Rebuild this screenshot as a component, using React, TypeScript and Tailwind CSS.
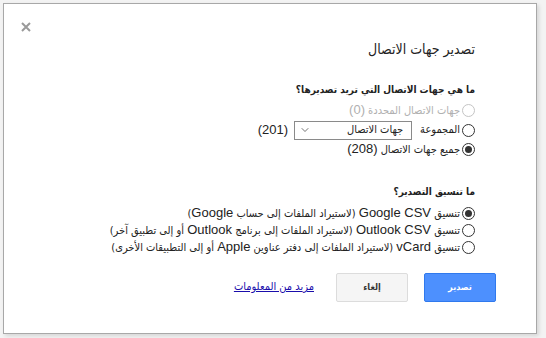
import { ChevronDown } from "lucide-react";

const Radio = ({ checked, disabled }: { checked?: boolean; disabled?: boolean }) => (
  <span
    className={`inline-flex h-[13px] w-[13px] shrink-0 items-center justify-center rounded-full border bg-white ${
      disabled ? "border-[#c4c4c4]" : "border-[#333]"
    }`}
  >
    {checked && <span className="h-[7px] w-[7px] rounded-full bg-[#333]" />}
  </span>
);

// latin words and digits keep Arial metrics
const L = ({ children }: { children: React.ReactNode }) => (
  <span className="text-[13px]" style={{ fontFamily: '"Liberation Sans", Arial, sans-serif' }}>
    {children}
  </span>
);

export default function App() {
  return (
    <div
      className="h-[338px] w-[546px] bg-[#f3f3f3] p-[3px]"
      style={{ fontFamily: '"DejaVu Sans Condensed", "DejaVu Sans", sans-serif' }}
    >
      <div
        dir="rtl"
        className="relative flex h-[331px] w-[534px] flex-col border border-[#a8a8a8] bg-white pr-[61px] text-[11px] text-[#222] shadow-[2px_2px_4px_rgba(0,0,0,0.12)]"
      >
        <svg className="absolute left-[17px] top-[18px]" width="10" height="10" viewBox="0 0 10 10">
          <path d="M1 1L9 9M9 1L1 9" stroke="#9a9a9a" strokeWidth="2" />
        </svg>

        <h1 className="mt-[34px] text-[14px] leading-[22px]">تصدير جهات الاتصال</h1>

        <h2 className="mt-[21px] text-[10px] font-bold leading-[18px]">ما هي جهات الاتصال التي تريد تصديرها؟</h2>
        <div className="mt-[2px] flex flex-col leading-[16px]">
          <label className="flex h-[19px] items-center gap-[2px] text-[#b0b0b0]">
            <Radio disabled />
            <span>
              جهات الاتصال المحددة <L>(0)</L>
            </span>
          </label>
          <label className="flex h-[20px] items-center gap-[2px]">
            <Radio />
            <span>المجموعة</span>
            <span className="mr-[6px] flex h-[19px] w-[118px] items-center justify-between border border-[#8a8a8a] pl-[4px] pr-[8px]">
              <span>جهات الاتصال</span>
              <ChevronDown size={12} strokeWidth={1.5} className="text-[#444]" />
            </span>
            <span className="mr-[4px]">
              <L>(201)</L>
            </span>
          </label>
          <label className="flex h-[19px] items-center gap-[2px]">
            <Radio checked />
            <span>
              جميع جهات الاتصال <L>(208)</L>
            </span>
          </label>
        </div>

        <h2 className="mt-[24px] text-[10px] font-bold leading-[18px]">ما تنسيق التصدير؟</h2>
        <div className="mt-[4px] flex flex-col leading-[16px]">
          <label className="flex h-[17px] items-center gap-[2px]">
            <Radio checked />
            <span>
              تنسيق <L>Google CSV</L> (لاستيراد الملفات إلى حساب <L>Google</L>)
            </span>
          </label>
          <label className="flex h-[17px] items-center gap-[2px]">
            <Radio />
            <span>
              تنسيق <L>Outlook CSV</L> (لاستيراد الملفات إلى برنامج <L>Outlook</L> أو إلى تطبيق آخر)
            </span>
          </label>
          <label className="flex h-[17px] items-center gap-[2px]">
            <Radio />
            <span>
              تنسيق <L>vCard</L> (لاستيراد الملفات إلى دفتر عناوين <L>Apple</L> أو إلى التطبيقات الأخرى)
            </span>
          </label>
        </div>

        <div className="-mr-[21px] mt-[17px] flex items-center">
          <button className="ml-[16px] h-[29px] w-[72px] rounded-[2px] border border-[#3079ed] bg-[#4d90fe] text-[9px] font-bold text-white">
            تصدير
          </button>
          <button className="ml-[22px] h-[29px] w-[72px] rounded-[2px] border border-[#dcdcdc] bg-[#f5f5f5] text-[9px] font-bold text-[#333]">
            إلغاء
          </button>
          <a href="#" className="text-[11px] text-[#1a0dab] underline">
            مزيد من المعلومات
          </a>
        </div>
      </div>
    </div>
  );
}
